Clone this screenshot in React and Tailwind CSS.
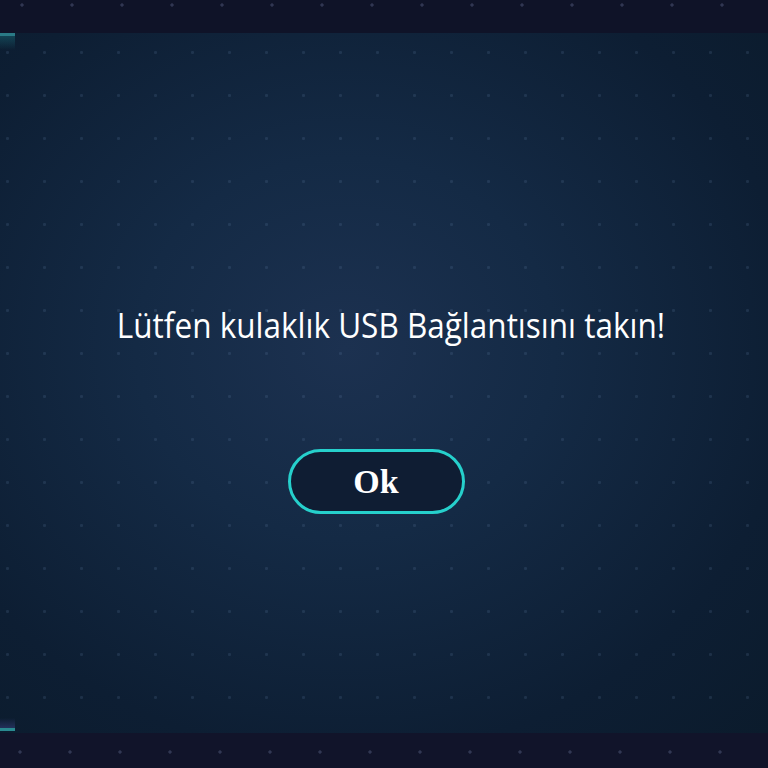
export default function App() {
  return (
    <div className="flex h-screen w-full flex-col bg-[#10142a] font-['Open_Sans',sans-serif]">
      <div className="h-[33px] w-full bg-[#0f1328] bg-[radial-gradient(circle,rgba(110,120,160,0.35)_1.3px,transparent_2px)] bg-[length:50px_50px] bg-[position:-3px_-20px]" />

      <div className="relative flex flex-1 flex-col items-center bg-[radial-gradient(ellipse_at_45%_45%,#1c3150_0%,#142a45_35%,#0d1e33_75%,#0b1b2c_100%)]">
        <div className="pointer-events-none absolute inset-0 bg-[radial-gradient(circle,rgba(110,140,180,0.17)_1.2px,transparent_1.9px)] bg-[length:37px_43px] bg-[position:-11px_-2px]" />
        <div className="pointer-events-none absolute left-0 top-0 h-[3px] w-[15px] bg-[#2a7a86]" />
        <div className="pointer-events-none absolute left-0 top-[3px] h-[14px] w-[15px] bg-[linear-gradient(to_bottom,#134354,transparent)]" />
        <div className="pointer-events-none absolute bottom-[2px] left-0 h-[3px] w-[15px] bg-[#2a8a90]" />
        <div className="pointer-events-none absolute bottom-[5px] left-0 h-[10px] w-[15px] bg-[linear-gradient(to_top,#23305a,transparent)]" />

        <p className="relative mt-[272px] whitespace-nowrap text-[31.5px] leading-[40px] text-white [transform:translateX(7px)_scaleY(1.08)]">
          Lütfen kulaklık USB Bağlantısını takın!
        </p>

        <button className="relative mt-[104px] flex h-[65px] w-[177px] items-center justify-center rounded-full border-[3px] border-[#26d0cc] bg-[#0f1d33] font-['Liberation_Serif',serif] text-[34px] font-bold text-white [transform:translateX(-8px)]">
          Ok
        </button>
      </div>

      <div className="h-[35px] w-full bg-[#11142a] bg-[radial-gradient(circle,rgba(110,120,160,0.35)_1.3px,transparent_2px)] bg-[length:50px_50px] bg-[position:-5px_-6px]" />
    </div>
  )
}
